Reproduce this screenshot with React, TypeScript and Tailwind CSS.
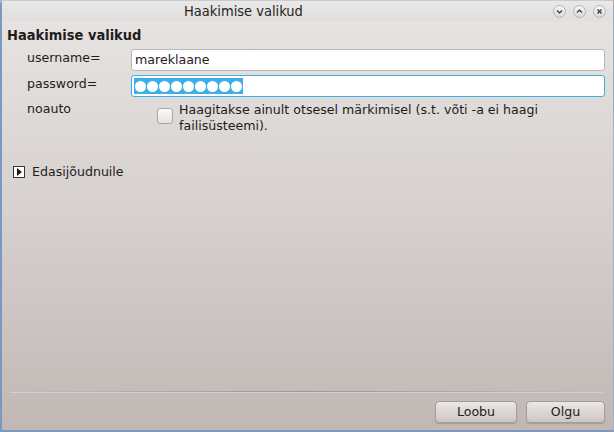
import React from "react";

function WinBtn({ kind }: { kind: "min" | "max" | "close" }) {
  return (
    <div className="w-[13px] h-[13px] rounded-full border border-[#b5b3b1] bg-gradient-to-b from-[#f6f6f5] to-[#dcdad8] flex items-center justify-center">
      <svg width="7" height="7" viewBox="0 0 7 7">
        {kind === "min" && <path d="M1 2.5 L3.5 5 L6 2.5" stroke="#333" strokeWidth="1.2" fill="none" />}
        {kind === "max" && <path d="M1 4.5 L3.5 2 L6 4.5" stroke="#333" strokeWidth="1.2" fill="none" />}
        {kind === "close" && <path d="M1.5 1.5 L5.5 5.5 M5.5 1.5 L1.5 5.5" stroke="#333" strokeWidth="1.2" fill="none" />}
      </svg>
    </div>
  );
}

export default function App() {
  const font = { fontFamily: '"DejaVu Sans", sans-serif' };
  const titleFont = { fontFamily: '"DejaVu Sans Condensed", "Liberation Sans", sans-serif', fontStretch: "condensed" as const };
  return (
    <div className="w-[614px] h-[432px] overflow-hidden bg-[#c3bab7]" style={font}>
      <div className="w-[614px] h-[432px] flex flex-col rounded-t-[5px] border-l-2 border-r border-b-2 border-t border-l-[#7b98c0] border-r-[#9eb0c8] border-b-[#7b98c0] border-t-[#c8ccd4] bg-gradient-to-b from-[#e7e5e3] via-[#d6d0ce] to-[#c1b8b5] text-[#1f1c1b]">
        {/* title bar */}
        <div className="h-[20px] flex items-center relative bg-gradient-to-b from-[#e9e8e7] to-[#e1dfdd]">
          <div className="absolute left-[182px] top-0 text-[14.5px] leading-[20px] text-[#232323]" style={titleFont}>Haakimise valikud</div>
          <div className="absolute right-[7px] top-[4px] flex gap-[7px]">
            <WinBtn kind="min" />
            <WinBtn kind="max" />
            <WinBtn kind="close" />
          </div>
        </div>
        <div className="flex-1 flex flex-col pl-[5px] pr-[8px]">
          <div className="text-[14.5px] font-bold leading-[18px] mt-[5px]" style={titleFont}>Haakimise valikud</div>
          <div className="flex flex-col mt-[5px] text-[12.6px]">
            <div className="flex items-center h-[22px]">
              <div className="w-[124px] pl-[20px] -mt-[4px]">username=</div>
              <div className="flex-1 h-[22px] rounded-[3px] border border-[#b9b7b5] bg-white flex items-center pl-[3px]">mareklaane</div>
            </div>
            <div className="flex items-center h-[22px] mt-[4px]">
              <div className="w-[124px] pl-[20px] -mt-[4px]">password=</div>
              <div className="flex-1 h-[22px] rounded-[3px] border border-[#3daee9] bg-white flex items-center pl-[2px]">
                <div className="h-[16px] bg-[#3daee9] flex items-center gap-[1px] px-[1px]">
                  {Array.from({ length: 9 }).map((_, i) => (
                    <div key={i} className="w-[11px] h-[11px] rounded-full bg-white" />
                  ))}
                </div>
              </div>
            </div>
            <div className="flex mt-[4px]">
              <div className="w-[124px] pl-[20px] -mt-[1px]">noauto</div>
              <div className="flex items-start ml-[26px] mt-[1px]">
                <div className="w-[16px] h-[16px] mt-[6px] rounded-[3px] border border-[#a9a6a4] bg-gradient-to-b from-[#fbfbfb] to-[#e6e4e2]" />
                <div className="ml-[6px] leading-[16px]">
                  Haagitakse ainult otsesel märkimisel (s.t. võti -a ei haagi
                  <br />
                  failisüsteemi).
                </div>
              </div>
            </div>
          </div>
          <div className="flex items-center mt-[29px] ml-[6px] text-[12.6px]">
            <div className="w-[12px] h-[12px] border border-[#333] bg-white flex items-center justify-center">
              <svg width="6" height="8" viewBox="0 0 6 8">
                <path d="M1 0 L6 4 L1 8 Z" fill="#1f1c1b" />
              </svg>
            </div>
            <div className="ml-[7px]">Edasijõudnuile</div>
          </div>
          <div className="flex-1" />
          <div className="h-[2px] mx-[3px] bg-gradient-to-r from-transparent via-[#9e9694] to-transparent border-b border-[#d6d0ce]" />
          <div className="flex justify-end gap-[9px] mt-[8px] mb-[7px] text-[12.6px]">
            <div className="w-[82px] h-[22px] rounded-[4px] border border-[#a29c9a] bg-gradient-to-b from-[#ebe8e6] to-[#cdc7c4] flex items-center justify-center shadow-[0_1px_1px_rgba(0,0,0,0.15)]">Loobu</div>
            <div className="w-[79px] h-[22px] rounded-[4px] border border-[#a29c9a] bg-gradient-to-b from-[#ebe8e6] to-[#cdc7c4] flex items-center justify-center shadow-[0_1px_1px_rgba(0,0,0,0.15)]">Olgu</div>
          </div>
        </div>
      </div>
    </div>
  );
}
